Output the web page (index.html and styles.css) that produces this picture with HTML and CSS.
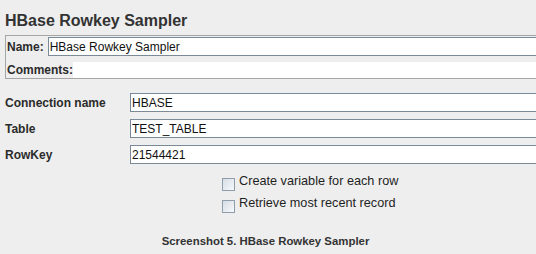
FILE: index.html
```html
<!DOCTYPE html>
<html lang="en">
<head>
    <meta charset="UTF-8">
    <meta name="viewport" content="width=device-width, initial-scale=1.0">
    <title>HBase Rowkey Sampler</title>
    <link rel="stylesheet" href="styles.css">
</head>
<body>
    <h1 class="title">HBase Rowkey Sampler</h1>

    <div class="name-panel">
        <div class="panel-row name-row">
            <label class="panel-label">Name:</label>
            <input type="text" class="field" value="HBase Rowkey Sampler">
        </div>
        <div class="panel-row comments-row">
            <label class="panel-label">Comments:</label>
            <div class="comments-area"></div>
        </div>
    </div>

    <div class="params">
        <div class="param-row">
            <label class="param-label">Connection name</label>
            <input type="text" class="field" value="HBASE">
        </div>
        <div class="param-row">
            <label class="param-label">Table</label>
            <input type="text" class="field" value="TEST_TABLE">
        </div>
        <div class="param-row">
            <label class="param-label">RowKey</label>
            <input type="text" class="field" value="21544421">
        </div>
    </div>

    <div class="options">
        <label class="option-row"><span class="check-box"></span><span class="option-text">Create variable for each row</span></label>
        <label class="option-row"><span class="check-box"></span><span class="option-text">Retrieve most recent record</span></label>
    </div>

    <p class="caption">Screenshot 5. HBase Rowkey Sampler</p>
</body>
</html>
```

FILE: styles.css
```css
html, body {
    margin: 0;
    padding: 0;
}
body {
    width: 536px;
    height: 254px;
    overflow: hidden;
    background-color: #eeeeee;
    font-family: "Liberation Sans", Arial, sans-serif;
    color: #222;
}
.title {
    margin: 11px 0 0 5px;
    height: 24px;
    font-size: 16px;
    line-height: 20px;
    font-weight: bold;
    color: #333;
}
.name-panel {
    margin-left: 5px;
    border: 1px solid #a5a5a5;
    border-right: none;
    padding: 1px 0 0 1px;
    display: flex;
    flex-direction: column;
    gap: 6px;
}
.panel-row {
    display: flex;
    align-items: center;
}
.name-row {
    height: 19px;
    gap: 4px;
}
.comments-row {
    height: 16px;
}
.panel-label {
    flex-shrink: 0;
    font-size: 12px;
    line-height: 14px;
    font-weight: bold;
    color: #2b2b2b;
}
.comments-area {
    flex: 1;
    height: 16px;
    background-color: white;
}
.field {
    flex: 1;
    min-width: 0;
    box-sizing: border-box;
    height: 19px;
    margin: 0;
    padding: 0 1px;
    border: 1px solid #7a8a99;
    border-right: none;
    background-color: white;
    font-family: "Liberation Sans", Arial, sans-serif;
    font-size: 12px;
    color: #111;
    outline: none;
}
.params {
    margin: 14px 0 0 5px;
    display: flex;
    flex-direction: column;
    gap: 7px;
}
.param-row {
    display: flex;
    align-items: center;
    height: 19px;
}
.param-label {
    flex-shrink: 0;
    width: 125px;
    font-size: 12px;
    line-height: 14px;
    font-weight: bold;
    color: #2b2b2b;
}
.options {
    margin-top: 9px;
    padding-left: 222px;
    display: flex;
    flex-direction: column;
}
.option-row {
    display: flex;
    align-items: center;
    gap: 4px;
    height: 22px;
}
.check-box {
    flex-shrink: 0;
    box-sizing: border-box;
    width: 13px;
    height: 13px;
    border: 1px solid #8f9dab;
    background: linear-gradient(135deg, #d5dde6, #f7f9fb);
}
.option-text {
    font-size: 12.7px;
    line-height: 15px;
    margin-bottom: 5px;
    color: #1e1e1e;
}
.caption {
    margin: 17px 5px 0 0;
    text-align: center;
    font-size: 11.4px;
    line-height: 14px;
    font-weight: bold;
    color: #333;
}
```
